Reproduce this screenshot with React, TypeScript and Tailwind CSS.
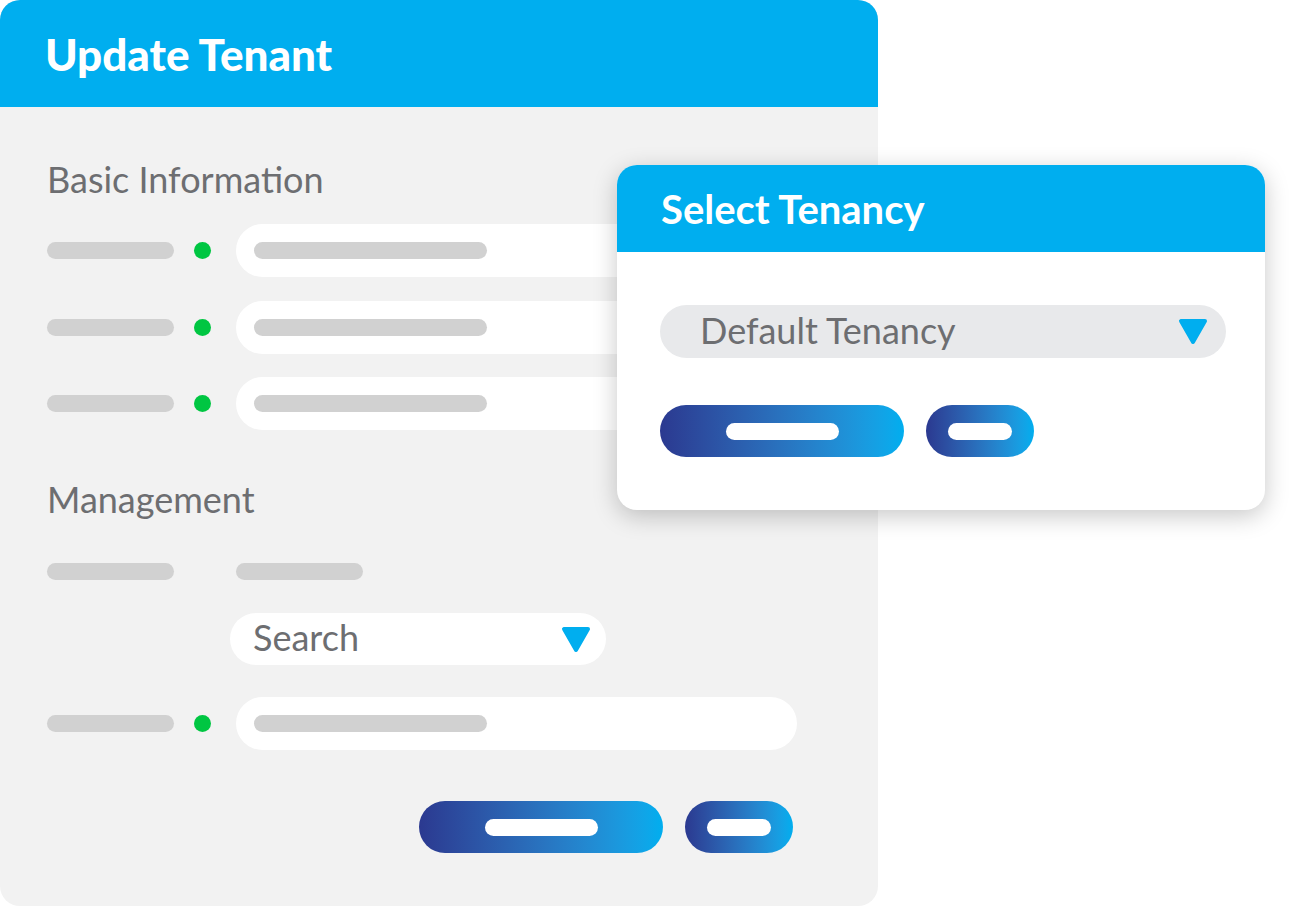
import React from 'react';

const Bar = ({ w }: { w: string }) => <div className={`${w} h-[17px] rounded-full bg-[#d1d1d1]`} />;

const Caret = ({ className }: { className: string }) => (
  <svg viewBox="0 0 30 27" className={className}>
    <path d="M3 3 L27 3 L15 24 Z" fill="#00aeef" stroke="#00aeef" strokeWidth="4" strokeLinejoin="round" />
  </svg>
);

const GradButton = ({ wide }: { wide?: boolean }) => (
  <div
    className={`${wide ? 'w-[244px]' : 'w-[108px]'} h-[52px] rounded-full bg-gradient-to-r from-[#2b3990] to-[#00aeef] flex items-center justify-center`}
  >
    <div className={`${wide ? 'w-[113px]' : 'w-[64px]'} h-[17px] rounded-full bg-white`} />
  </div>
);

const FieldRow = () => (
  <div className="flex items-center h-[53px]">
    <Bar w="w-[127px]" />
    <div className="ml-[20px] w-[17px] h-[17px] rounded-full bg-[#00c642]" />
    <div className="ml-[25px] w-[561px] h-[53px] rounded-full bg-white flex items-center pl-[18px]">
      <Bar w="w-[233px]" />
    </div>
  </div>
);

export default function App() {
  return (
    <div className="relative w-[1296px] h-[907px] bg-white overflow-hidden font-['Lato',sans-serif]">
      {/* main form card */}
      <div className="w-[878px] h-[906px] rounded-[20px] bg-[#f2f2f2] overflow-hidden flex flex-col">
        <div className="h-[107px] bg-[#00aeef] flex items-center pl-[45px] shrink-0">
          <span className="text-[44px] font-black text-white leading-none">Update Tenant</span>
        </div>

        <div className="flex flex-col pl-[47px] pt-[54px]">
          <div className="h-[36px] text-[36px] leading-none text-[#6d6e71]">Basic Information</div>

          <div className="mt-[27px] flex flex-col gap-[23.5px]">
            <FieldRow />
            <FieldRow />
            <FieldRow />
          </div>

          <div className="mt-[51px] h-[36px] text-[36px] leading-none text-[#6d6e71]">Management</div>

          <div className="mt-[46px] flex items-center gap-[62px]">
            <Bar w="w-[127px]" />
            <Bar w="w-[127px]" />
          </div>

          <div className="mt-[33px] ml-[183px] w-[376px] h-[52px] rounded-full bg-white flex items-center justify-between pl-[23px] pr-[15px]">
            <span className="text-[36px] leading-none text-[#6d6e71] pb-[4px]">Search</span>
            <Caret className="w-[30px] h-[27px]" />
          </div>

          <div className="mt-[32px]">
            <FieldRow />
          </div>

          <div className="mt-[51px] ml-[372px] flex items-center gap-[22px]">
            <GradButton wide />
            <GradButton />
          </div>
        </div>
      </div>

      {/* select tenancy dialog */}
      <div className="absolute left-[617px] top-[165px] w-[648px] h-[345px] rounded-[20px] bg-white overflow-hidden shadow-[0_6px_24px_rgba(0,0,0,0.22)] flex flex-col">
        <div className="h-[87px] bg-[#00aeef] flex items-center pl-[44px] shrink-0">
          <span className="text-[40px] font-bold text-white leading-none">Select Tenancy</span>
        </div>
        <div className="flex flex-col pl-[43px]">
          <div className="mt-[53px] w-[566px] h-[53px] rounded-full bg-[#e8e9eb] flex items-center justify-between pl-[40px] pr-[18px]">
            <span className="text-[36px] leading-none text-[#6d6e71] pb-[4px]">Default Tenancy</span>
            <Caret className="w-[30px] h-[27px]" />
          </div>
          <div className="mt-[47px] flex items-center gap-[22px]">
            <GradButton wide />
            <GradButton />
          </div>
        </div>
      </div>
    </div>
  );
}
